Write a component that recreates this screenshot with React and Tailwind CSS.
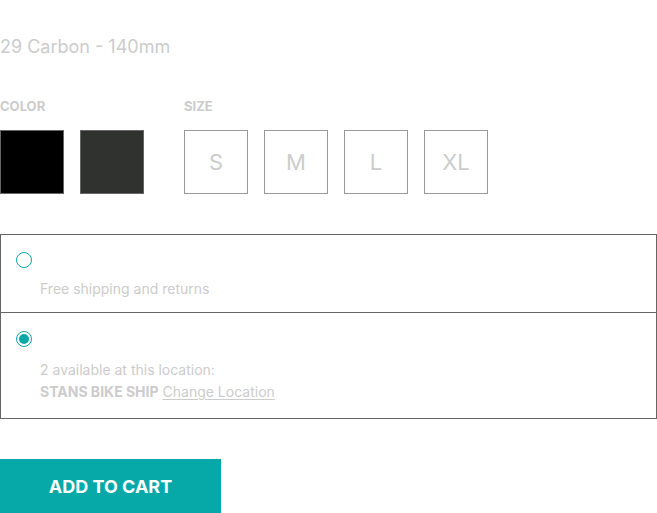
import React, { useState } from 'react';

const sizes = ['S', 'M', 'L', 'XL'];

const Radio = ({ checked }) => (
    <span className="flex h-4 w-4 items-center justify-center rounded-full border border-[#0aa8a6]">
        {checked && <span className="h-[10px] w-[10px] rounded-full bg-[#0aa8a6]" />}
    </span>
);

const App = () => {
    const [option, setOption] = useState('store');

    return (
        <div className="bg-white text-[#cccccc]" style={{ fontFamily: 'Inter, "Noto Sans", sans-serif' }}>
            <h1 className="pt-[35px] text-[18px] leading-[24px]">29 Carbon - 140mm</h1>

            <div className="mt-[39px] flex gap-10">
                <div>
                    <div className="text-[13px] font-bold leading-4">COLOR</div>
                    <div className="mt-4 flex gap-4">
                        <button className="h-16 w-16 border border-[#666] bg-black" />
                        <button className="h-16 w-16 border border-[#666] bg-[#2f322e]" />
                    </div>
                </div>
                <div>
                    <div className="text-[13px] font-bold leading-4">SIZE</div>
                    <div className="mt-4 flex gap-4">
                        {sizes.map((s) => (
                            <button
                                key={s}
                                className="flex h-16 w-16 items-center justify-center border border-[#999] text-[22px] text-[#cccccc]"
                            >
                                {s}
                            </button>
                        ))}
                    </div>
                </div>
            </div>

            <div className="mt-10 w-[657px] border border-[#666]">
                <div className="h-[78px] cursor-pointer border-b border-[#666] pl-[15px] pt-[17px]" onClick={() => setOption('ship')}>
                    <Radio checked={option === 'ship'} />
                    <p className="mt-[12px] pl-6 text-[14px] leading-[18px]">Free shipping and returns</p>
                </div>
                <div className="h-[105px] cursor-pointer pl-[15px] pt-[18px]" onClick={() => setOption('store')}>
                    <Radio checked={option === 'store'} />
                    <p className="mt-[12px] pl-6 text-[14px] leading-[22px]">2 available at this location:</p>
                    <p className="pl-6 text-[14px] leading-[22px]">
                        <span className="font-bold">STANS BIKE SHIP</span>{' '}
                        <a href="#" className="underline underline-offset-2">Change Location</a>
                    </p>
                </div>
            </div>

            <button className="mt-10 h-[54px] w-[221px] bg-[#06a9a7] text-[18px] font-bold text-white">
                ADD TO CART
            </button>
        </div>
    );
};

export default App;
